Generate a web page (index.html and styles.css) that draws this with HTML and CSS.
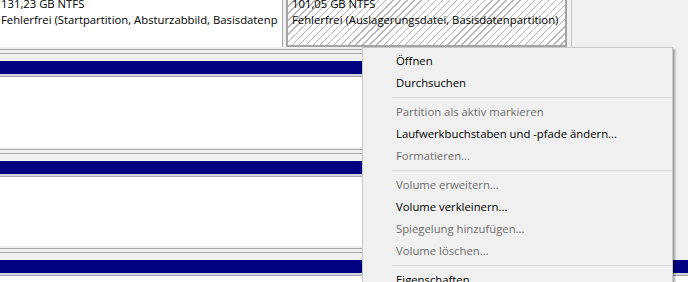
FILE: index.html
```html
<!DOCTYPE html>
<html lang="de">
<head>
<meta charset="utf-8">
<title>Datenträgerverwaltung</title>
<link rel="stylesheet" href="styles.css">
</head>
<body>
<div class="disks">
  <div class="disk disk-top">
    <div class="parts">
      <div class="part plain">
        <div class="txt">
          <div class="line">131,23 GB NTFS</div>
          <div class="line">Fehlerfrei (Startpartition, Absturzabbild, Basisdatenp</div>
        </div>
      </div>
      <div class="part hatched">
        <div class="txt">
          <div class="line">101,05 GB NTFS</div>
          <div class="line">Fehlerfrei (Auslagerungsdatei, Basisdatenpartition)</div>
        </div>
      </div>
    </div>
    <div class="foot"></div>
  </div>
  <div class="disk">
    <div class="bar"></div>
    <div class="body tall"></div>
    <div class="foot"></div>
  </div>
  <div class="disk">
    <div class="bar"></div>
    <div class="body"></div>
    <div class="foot"></div>
  </div>
  <div class="disk wide">
    <div class="bar"></div>
    <div class="body"></div>
  </div>
</div>

<ul class="menu">
  <li class="item">Öffnen</li>
  <li class="item">Durchsuchen</li>
  <li class="sep"></li>
  <li class="item off">Partition als aktiv markieren</li>
  <li class="item">Laufwerkbuchstaben und -pfade ändern...</li>
  <li class="item off">Formatieren...</li>
  <li class="sep"></li>
  <li class="item off">Volume erweitern...</li>
  <li class="item">Volume verkleinern...</li>
  <li class="item off">Spiegelung hinzufügen...</li>
  <li class="item off">Volume löschen...</li>
  <li class="sep"></li>
  <li class="item">Eigenschaften</li>
</ul>
</body>
</html>
```
FILE: styles.css
```css
html, body {
  margin: 0;
  padding: 0;
  height: 100%;
  overflow: hidden;
}
body {
  background: #f0f0f0;
  font-family: "Open Sans", "Liberation Sans", sans-serif;
  font-size: 11.3px;
  color: #000;
}

.disks {
  display: flex;
  flex-direction: column;
}
.disk {
  width: 572px;
  margin-bottom: 7px;
}
.disk.wide {
  width: 100%;
}

.parts {
  display: flex;
  height: 47px;
  width: 571px;
  border-right: 1px solid #c4c4c4;
}
.part {
  box-sizing: border-box;
  height: 47px;
  overflow: hidden;
}
.part.plain {
  width: 283px;
  background: #fff;
  border-right: 1px solid #a8a8a8;
}
.part.hatched {
  width: 281px;
  margin-left: 3px;
  border: 2px solid #a4a4a4;
  border-top: 0;
  background: repeating-linear-gradient(135deg, #ffffff 0 4px, #b4b4b4 4px 5px);
}
.txt {
  margin-top: -4px;
  line-height: 16px;
  white-space: nowrap;
}
.plain .txt {
  padding-left: 1px;
}
.hatched .txt {
  padding-left: 4px;
}

.foot {
  margin-top: 2px;
  height: 3px;
  border-top: 1px solid #a8a8a8;
  border-bottom: 1px solid #a8a8a8;
}

.bar {
  height: 13px;
  background: #000080;
  border-bottom: 2px solid #d2d2e4;
}
.body {
  height: 69px;
  background: #fff;
  border-top: 1px solid #a4a4a4;
}
.body.tall {
  height: 70px;
}

.menu {
  position: absolute;
  left: 362px;
  top: 47px;
  box-sizing: border-box;
  width: 311px;
  margin: 0;
  padding: 2px 0 0;
  list-style: none;
  background: #f0f0f0;
  border: 1px solid #c8c8c8;
  box-shadow: 2px 2px 2px rgba(0, 0, 0, 0.35);
}
.item {
  height: 22px;
  line-height: 22px;
  padding-left: 33px;
  white-space: nowrap;
}
.item.off {
  color: #6d6d6d;
}
.sep {
  height: 1px;
  margin: 3px 0 3px 29px;
  background: #d7d7d7;
}
```
